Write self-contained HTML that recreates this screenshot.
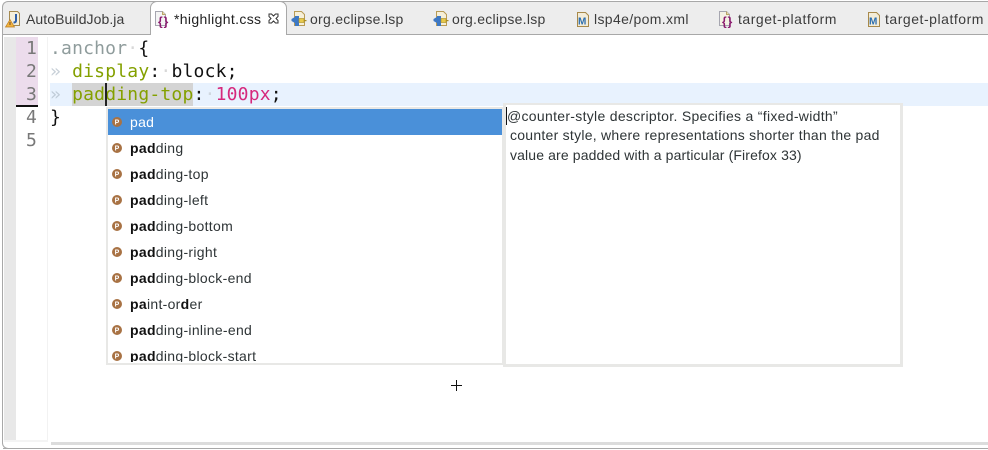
<!DOCTYPE html>
<html><head><meta charset="utf-8">
<style>
html,body{margin:0;padding:0;background:#fff}
#r{position:relative;width:988px;height:450px;overflow:hidden;background:#fff;font-family:"Liberation Sans",sans-serif}
#r div,#r svg{position:absolute}
#r svg{overflow:visible}
.t{font-size:14px;color:#3c3c3c;top:10px;line-height:18px;white-space:nowrap;letter-spacing:.2px}
.c{font-family:"DejaVu Sans Mono",monospace;font-size:18px;letter-spacing:.2px;line-height:23px;white-space:pre;height:23px}
.n{font-family:"DejaVu Sans Mono",monospace;font-size:18px;color:#787878;line-height:23px;left:26px}
.row{left:130px;font-size:14px;line-height:18px;color:#2e3436;white-space:nowrap;letter-spacing:.3px}
.row b{color:#111}
.d{left:510px;font-size:14px;line-height:18px;color:#2e3436;white-space:nowrap}
</style></head><body>
<div id="r">
<!-- tab bar -->
<div style="left:2px;top:1px;width:986px;height:33px;background:#ededed;border-top:1px solid #a8a8a8;border-left:1px solid #a8a8a8;border-top-left-radius:6px;box-sizing:border-box"></div>
<div style="left:2px;top:34px;width:986px;height:1px;background:#a8a8a8"></div>
<div style="left:2px;top:34px;width:1px;height:408px;background:#a8a8a8"></div>
<div style="left:150px;top:1px;width:137px;height:34px;background:#fff;border:1px solid #a8a8a8;border-bottom:none;border-radius:7px 7px 0 0;box-sizing:border-box"></div>

<!-- tab icons -->
<svg style="left:5px;top:10px" width="16" height="18" viewBox="0 0 16 18"><path d="M4.500 1.500h8l2 2v12h-10z" fill="#f5efdc" stroke="#a58a50"/><path d="M11 4v6.500q0 2-2.500 2" fill="none" stroke="#2f5fa8" stroke-width="2"/><path d="M5 9.500l4.500 7.500h-9z" fill="#f2b33d" stroke="#b97c20" stroke-width=".7"/><rect x="4.500" y="12" width="1" height="3" fill="#643"/></svg>

<svg style="left:154px;top:11px" width="16" height="17" viewBox="0 0 16 17"><path d="M1.500 .5h7l3 3v11h-10z" fill="#f4f4f4" stroke="#a6a6b0"/><path d="M8.500 .5v3h3" fill="#e8d9a8" stroke="#b9a56a"/><text x="4" y="14.500" font-family="Liberation Sans" font-weight="bold" font-size="12" letter-spacing="1" fill="#8a1a6e">{}</text></svg>

<svg style="left:291px;top:11px" width="16" height="17" viewBox="0 0 16 17"><path d="M3.500 .5h7l3 3v11h-10z" fill="#f6efd8" stroke="#b89b55"/><path d="M.5 8l3.500-2v6l-3.500-2z" fill="#3d78c4"/><rect x="4" y="5" width="4" height="10" fill="#3d78c4"/><rect x="8" y="7.500" width="5" height="4" fill="#e8c94a" stroke="#a98c22" stroke-width=".6"/><rect x="13" y="9" width="2.500" height="1.200" fill="#a98c22"/></svg>
<svg style="left:433px;top:11px" width="16" height="17" viewBox="0 0 16 17"><path d="M3.500 .5h7l3 3v11h-10z" fill="#f6efd8" stroke="#b89b55"/><path d="M.5 8l3.500-2v6l-3.500-2z" fill="#3d78c4"/><rect x="4" y="5" width="4" height="10" fill="#3d78c4"/><rect x="8" y="7.500" width="5" height="4" fill="#e8c94a" stroke="#a98c22" stroke-width=".6"/><rect x="13" y="9" width="2.500" height="1.200" fill="#a98c22"/></svg>

<svg style="left:577px;top:12px" width="12" height="15" viewBox="0 0 12 15"><path d="M.5 .5h8l3 3v11h-11z" fill="#f3ecd8" stroke="#a8894a"/><text x="1" y="12.500" font-family="Liberation Sans" font-weight="bold" font-size="10" fill="#2a6db0">M</text></svg>
<svg style="left:718px;top:11px" width="16" height="17" viewBox="0 0 16 17"><path d="M1.500 .5h7l3 3v11h-10z" fill="#f4f1e4" stroke="#a6a6b0"/><path d="M8.500 .5v3h3" fill="#e8d9a8" stroke="#b9a56a"/><text x="4" y="14.500" font-family="Liberation Sans" font-weight="bold" font-size="12" letter-spacing="1" fill="#8a1a6e">{}</text></svg>
<svg style="left:868px;top:12px" width="12" height="15" viewBox="0 0 12 15"><path d="M.5 .5h8l3 3v11h-11z" fill="#f3ecd8" stroke="#a8894a"/><text x="1" y="12.500" font-family="Liberation Sans" font-weight="bold" font-size="10" fill="#2a6db0">M</text></svg>

<!-- tab labels -->
<div class="t" style="left:26px;letter-spacing:.07px">AutoBuildJob.ja</div>
<div class="t" style="left:174px;color:#222;letter-spacing:.35px">*highlight.css</div>
<svg style="left:268px;top:13px" width="11" height="11" viewBox="0 0 11 11"><path d="M1 1h2.500l2 2 2-2H10v2.500l-2 2 2 2V10H7.500l-2-2-2 2H1V7.500l2-2-2-2z" fill="#fff" stroke="#333" stroke-width="1"/></svg>
<div class="t" style="left:310px;letter-spacing:.27px">org.eclipse.lsp</div>
<div class="t" style="left:452px;letter-spacing:.27px">org.eclipse.lsp</div>
<div class="t" style="left:594px;letter-spacing:.35px">lsp4e/pom.xml</div>
<div class="t" style="left:738px;letter-spacing:.53px">target-platform</div>
<div class="t" style="left:885px;letter-spacing:.53px">target-platform</div>

<!-- gutter -->
<div style="left:4px;top:37px;width:12px;height:403px;background:#e8e8e8"></div>
<div style="left:16px;top:37px;width:22px;height:68px;background:#ecdcec"></div>
<div style="left:16px;top:105px;width:22px;height:2px;background:#111"></div>
<div style="left:47px;top:37px;width:1px;height:403px;background:#f2f2f2"></div>
<div style="left:4px;top:440px;width:44px;height:2px;background:#f4f4f4"></div>
<div class="n" style="top:37px">1</div>
<div class="n" style="top:60px">2</div>
<div class="n" style="top:83px">3</div>
<div class="n" style="top:106px">4</div>
<div class="n" style="top:129px">5</div>

<!-- editor -->
<div style="left:50px;top:83px;width:938px;height:23px;background:#e8f2fe"></div>
<div style="left:72px;top:83px;width:121px;height:23px;background:#d4d4d4"></div>
<div class="c" style="left:50px;top:37px"><span style="color:#8f9c9c">.anchor</span><span style="color:#d8d8d8">·</span><span style="color:#111">{</span></div>
<div class="c" style="left:50px;top:60px"><span style="color:#c8d0d8">»</span> <span style="color:#84a000">display</span><span style="color:#111">:</span><span style="color:#d8d8d8">·</span><span style="color:#111">block;</span></div>
<div class="c" style="left:50px;top:83px"><span style="color:#c0ccd8">»</span> <span style="color:#84a000">padding-top</span><span style="color:#111">:</span><span style="color:#d0d8e0">·</span><span style="color:#d6287c">100px</span><span style="color:#111">;</span></div>
<div class="c" style="left:50px;top:106px;color:#111">}</div>
<div style="left:105px;top:83px;width:2px;height:23px;background:#222"></div>

<!-- completion list -->
<div style="left:106px;top:107px;width:398px;height:258px;background:#fff;border:2px solid #e8e8e6;box-sizing:border-box;overflow:hidden"></div>
<div style="left:108px;top:109px;width:394px;height:26px;background:#4a90d9"></div>
<svg style="left:111px;top:115px" width="12" height="250" viewBox="0 0 12 250">
<g fill="#a87244"><circle cx="6" cy="7" r="5"/><circle cx="6" cy="33" r="5"/><circle cx="6" cy="59" r="5"/><circle cx="6" cy="85" r="5"/><circle cx="6" cy="111" r="5"/><circle cx="6" cy="137" r="5"/><circle cx="6" cy="163" r="5"/><circle cx="6" cy="189" r="5"/><circle cx="6" cy="215" r="5"/><circle cx="6" cy="241" r="5"/></g>
<g fill="#fff" font-family="Liberation Sans" font-weight="bold" font-size="7" text-anchor="middle"><text x="6" y="9.500">P</text><text x="6" y="35.500">P</text><text x="6" y="61.500">P</text><text x="6" y="87.500">P</text><text x="6" y="113.500">P</text><text x="6" y="139.500">P</text><text x="6" y="165.500">P</text><text x="6" y="191.500">P</text><text x="6" y="217.500">P</text><text x="6" y="243.500">P</text></g>
</svg>
<div class="row" style="top:113px;color:#fff">pad</div>
<div class="row" style="top:139px"><b>pad</b>ding</div>
<div class="row" style="top:165px"><b>pad</b>ding-top</div>
<div class="row" style="top:191px"><b>pad</b>ding-left</div>
<div class="row" style="top:217px"><b>pad</b>ding-bottom</div>
<div class="row" style="top:243px"><b>pad</b>ding-right</div>
<div class="row" style="top:269px"><b>pad</b>ding-block-end</div>
<div class="row" style="top:295px"><b>pa</b>int-or<b>d</b>er</div>
<div class="row" style="top:321px"><b>pad</b>ding-inline-end</div>
<div style="left:130px;top:347px;width:300px;height:15px;overflow:hidden"><div class="row" style="left:0;top:0"><b>pad</b>ding-block-start</div></div>

<!-- docs -->
<div style="left:503px;top:103px;width:400px;height:264px;background:#fff;border:3px solid #e8e8e6;border-top-width:2px;box-sizing:border-box"></div>
<div style="left:506px;top:107px;width:1px;height:18px;background:#111"></div>
<div class="d" style="left:507px;top:107px;letter-spacing:.3px">@counter-style descriptor. Specifies a “fixed-width”</div>
<div class="d" style="top:126px;letter-spacing:.26px">counter style, where representations shorter than the pad</div>
<div class="d" style="top:146px;letter-spacing:.13px">value are padded with a particular (Firefox 33)</div>

<!-- cursor -->
<div style="left:451px;top:385px;width:11px;height:1px;background:#111"></div>
<div style="left:456px;top:380px;width:1px;height:11px;background:#111"></div>

<!-- bottom -->
<div style="left:51px;top:442px;width:937px;height:3px;background:#dcdcdc"></div>
<div style="left:3px;top:448px;width:985px;height:1px;background:#a8a8a8"></div>
<div style="left:2px;top:442px;width:6px;height:6px;border-left:1px solid #a8a8a8;border-bottom:1px solid #a8a8a8;border-bottom-left-radius:6px;box-sizing:content-box"></div>
</div>
</body></html>
